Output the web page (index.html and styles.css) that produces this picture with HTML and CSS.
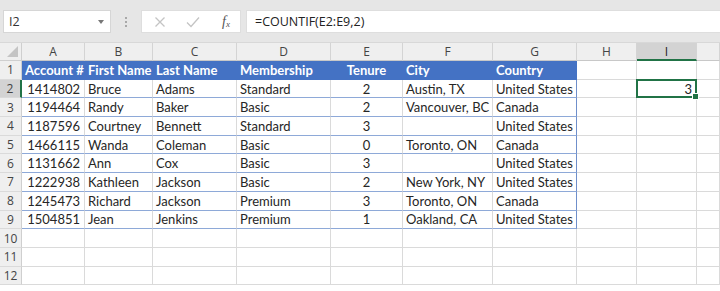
FILE: index.html
```html
<!DOCTYPE html>
<html>
<head>
<meta charset="utf-8">
<link rel="stylesheet" href="styles.css">
</head>
<body>
<div class="toolbar">
  <div class="namebox"><span>I2</span><span class="dd"></span></div>
  <div class="grip"><i></i><i></i><i></i></div>
  <div class="fbtns">
    <svg class="ico" width="12" height="12" viewBox="0 0 12 12"><path d="M1.5 1.5L10.5 10.5M10.5 1.5L1.5 10.5" stroke="#c4c4c4" stroke-width="1.3" fill="none"/></svg>
    <svg class="ico" width="14" height="12" viewBox="0 0 14 12"><path d="M1 6.5L5 10.5L13 1.5" stroke="#c4c4c4" stroke-width="1.3" fill="none"/></svg>
    <span class="fx">f<sub>x</sub></span>
  </div>
  <div class="formula">=COUNTIF(E2:E9,2)</div>
</div>
<div class="sheet">
  <div class="corner"><span class="tri"></span></div>
  <div class="ch">A</div><div class="ch">B</div><div class="ch">C</div><div class="ch">D</div><div class="ch">E</div><div class="ch">F</div><div class="ch">G</div><div class="ch">H</div><div class="ch sel">I</div><div class="ch"></div>

  <div class="rh">1</div>
  <div class="c th">Account #</div><div class="c th">First Name</div><div class="c th">Last Name</div><div class="c th">Membership</div><div class="c th ctr">Tenure</div><div class="c th">City</div><div class="c th">Country</div><div class="c"></div><div class="c"></div><div class="c"></div>

  <div class="rh rsel">2</div>
  <div class="c t num">1414802</div><div class="c t">Bruce</div><div class="c t">Adams</div><div class="c t">Standard</div><div class="c t ctr">2</div><div class="c t">Austin, TX</div><div class="c t tl">United States</div><div class="c"></div><div class="c num active">3</div><div class="c"></div>

  <div class="rh">3</div>
  <div class="c t num">1194464</div><div class="c t">Randy</div><div class="c t">Baker</div><div class="c t">Basic</div><div class="c t ctr">2</div><div class="c t">Vancouver, BC</div><div class="c t tl">Canada</div><div class="c"></div><div class="c"></div><div class="c"></div>

  <div class="rh">4</div>
  <div class="c t num">1187596</div><div class="c t">Courtney</div><div class="c t">Bennett</div><div class="c t">Standard</div><div class="c t ctr">3</div><div class="c t"></div><div class="c t tl">United States</div><div class="c"></div><div class="c"></div><div class="c"></div>

  <div class="rh">5</div>
  <div class="c t num">1466115</div><div class="c t">Wanda</div><div class="c t">Coleman</div><div class="c t">Basic</div><div class="c t ctr">0</div><div class="c t">Toronto, ON</div><div class="c t tl">Canada</div><div class="c"></div><div class="c"></div><div class="c"></div>

  <div class="rh">6</div>
  <div class="c t num">1131662</div><div class="c t">Ann</div><div class="c t">Cox</div><div class="c t">Basic</div><div class="c t ctr">3</div><div class="c t"></div><div class="c t tl">United States</div><div class="c"></div><div class="c"></div><div class="c"></div>

  <div class="rh">7</div>
  <div class="c t num">1222938</div><div class="c t">Kathleen</div><div class="c t">Jackson</div><div class="c t">Basic</div><div class="c t ctr">2</div><div class="c t">New York, NY</div><div class="c t tl">United States</div><div class="c"></div><div class="c"></div><div class="c"></div>

  <div class="rh">8</div>
  <div class="c t num">1245473</div><div class="c t">Richard</div><div class="c t">Jackson</div><div class="c t">Premium</div><div class="c t ctr">3</div><div class="c t">Toronto, ON</div><div class="c t tl">Canada</div><div class="c"></div><div class="c"></div><div class="c"></div>

  <div class="rh">9</div>
  <div class="c t num">1504851</div><div class="c t">Jean</div><div class="c t">Jenkins</div><div class="c t">Premium</div><div class="c t ctr">1</div><div class="c t">Oakland, CA</div><div class="c t tl">United States</div><div class="c"></div><div class="c"></div><div class="c"></div>

  <div class="rh">10</div>
  <div class="c"></div><div class="c"></div><div class="c"></div><div class="c"></div><div class="c"></div><div class="c"></div><div class="c"></div><div class="c"></div><div class="c"></div><div class="c"></div>

  <div class="rh">11</div>
  <div class="c"></div><div class="c"></div><div class="c"></div><div class="c"></div><div class="c"></div><div class="c"></div><div class="c"></div><div class="c"></div><div class="c"></div><div class="c"></div>

  <div class="rh">12</div>
  <div class="c"></div><div class="c"></div><div class="c"></div><div class="c"></div><div class="c"></div><div class="c"></div><div class="c"></div><div class="c"></div><div class="c"></div><div class="c"></div>
</div>
</body>
</html>
```
FILE: styles.css
```css
* { box-sizing: border-box; }
html, body { margin: 0; padding: 0; }
body {
  width: 720px;
  height: 291px;
  overflow: hidden;
  background: #ffffff;
  font-family: Lato, "Liberation Sans", sans-serif;
  font-size: 13px;
  color: #262626;
}
.toolbar {
  height: 43px;
  background: #e6e6e6;
  display: flex;
  align-items: flex-start;
  padding-top: 10px;
  padding-left: 3px;
  border-bottom: 1px solid #d8d8d8;
}
.namebox {
  width: 108px;
  height: 23px;
  background: #fff;
  border: 1px solid #d6d6d6;
  display: flex;
  align-items: center;
  justify-content: space-between;
  padding: 0 6px 0 5px;
  color: #333;
  font-family: "Open Sans", sans-serif;
  font-size: 12.5px;
}
.dd {
  width: 0; height: 0;
  border-left: 3.5px solid transparent;
  border-right: 3.5px solid transparent;
  border-top: 4px solid #777;
}
.grip {
  width: 30px;
  height: 23px;
  display: flex;
  flex-direction: column;
  align-items: center;
  justify-content: center;
  gap: 2px;
}
.grip i {
  display: block;
  width: 2px; height: 2px;
  background: #a8a8a8;
}
.fbtns {
  width: 100px;
  height: 23px;
  background: #fff;
  border: 1px solid #dedede;
  display: flex;
  align-items: center;
  padding-left: 12px;
  gap: 20px;
}
.fx {
  font-family: "Liberation Serif", serif;
  font-style: italic;
  font-size: 14px;
  color: #555;
  margin-left: 2px;
}
.fx sub { font-size: 9px; vertical-align: -1px; }
.formula {
  flex: 1;
  height: 23px;
  margin-left: 5px;
  background: #fff;
  border: 1px solid #dedede;
  border-right: none;
  padding-left: 8px;
  display: flex;
  align-items: center;
  font-family: "Open Sans", sans-serif;
  font-size: 12.5px;
  color: #222;
}
.sheet {
  display: grid;
  grid-template-columns: 22px 63px 68px 84px 94px 72px 90px 84px 60px 60px 1fr;
  grid-template-rows: 18px repeat(12, 18.7px);
}
.corner {
  background: #efefef;
  border-right: 1px solid #cfcfcf;
  border-bottom: 1px solid #cfcfcf;
  position: relative;
}
.tri {
  position: absolute;
  right: 3px; bottom: 3px;
  width: 0; height: 0;
  border-left: 11px solid transparent;
  border-bottom: 11px solid #c4c4c4;
}
.ch {
  background: #efefef;
  border-right: 1px solid #d4d4d4;
  border-bottom: 1px solid #c8c8c8;
  display: flex;
  align-items: center;
  justify-content: center;
  color: #444;
  font-family: "Open Sans", sans-serif;
  font-size: 12px;
}
.ch.sel {
  background: #d3d3d3;
  border-bottom: 2px solid #217346;
  color: #222;
}
.rh {
  background: #efefef;
  border-right: 1px solid #cfcfcf;
  border-bottom: 1px solid #dadada;
  display: flex;
  align-items: center;
  justify-content: center;
  color: #444;
  font-family: "Open Sans", sans-serif;
  font-size: 12px;
}
.rh.rsel {
  background: #d3d3d3;
  border-right: 2px solid #217346;
}
.c {
  border-right: 1px solid #dadada;
  border-bottom: 1px solid #dadada;
  display: flex;
  align-items: center;
  padding: 0 3px;
  white-space: nowrap;
  overflow: visible;
}
.c.th {
  background: #4472c4;
  color: #fff;
  font-weight: bold;
  border-right-color: #4472c4;
  border-bottom-color: #4472c4;
}
.c.t { border-bottom: 1px solid #8ea9d8; }
.c.tl { border-right: 1px solid #6f8fcb; }
.num { justify-content: flex-end; padding-right: 4px; }
.ctr { justify-content: center; }
.active { position: relative; }
.active::before {
  content: "";
  position: absolute;
  left: -1px; top: -1px; right: -1px; bottom: -1px;
  border: 2px solid #217346;
}
.active::after {
  content: "";
  position: absolute;
  right: -3px; bottom: -3px;
  width: 5px; height: 5px;
  background: #217346;
  border: 1px solid #fff;
}
```
